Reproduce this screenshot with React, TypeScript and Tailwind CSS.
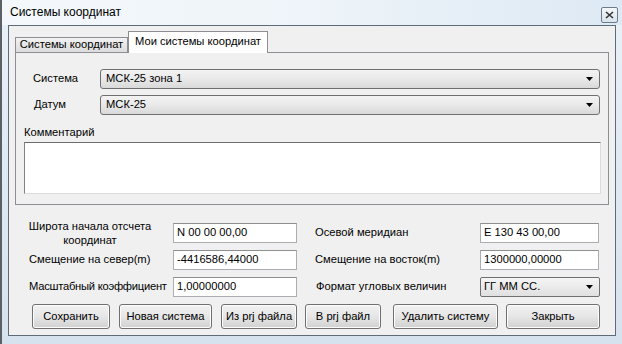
import React from 'react';

const font = { fontFamily: '"Liberation Sans", Arial, sans-serif' };

const Combo: React.FC<{ value: string; className?: string }> = ({ value, className }) => (
  <div
    className={`flex items-center justify-between rounded-[3px] border border-[#707070] bg-gradient-to-b from-[#f3f3f3] via-[#e9e9e9] to-[#d9d9d9] pl-[5px] pr-[6px] text-[11.2px] leading-none text-black ${className ?? ''}`}
  >
    <span>{value}</span>
    <svg width="7" height="4" viewBox="0 0 7 4">
      <path d="M0 0h7L3.5 4z" fill="#000" />
    </svg>
  </div>
);

const Field: React.FC<{ value: string; className?: string }> = ({ value, className }) => (
  <div
    className={`flex h-[20px] items-center border border-[#abadb3] border-t-[#8e8f8f] bg-white pl-[3px] text-[11.2px] leading-none text-black ${className ?? ''}`}
  >
    {value}
  </div>
);

const Btn: React.FC<{ label: string; className: string }> = ({ label, className }) => (
  <button
    className={`flex h-[25px] items-center justify-center whitespace-nowrap rounded-[3px] border border-[#707070] bg-gradient-to-b from-[#f2f2f2] via-[#e6e6e6] to-[#d1d1d1] text-[11.2px] leading-none text-black shadow-[inset_0_0_0_1px_#fcfcfc] ${className}`}
  >
    {label}
  </button>
);

export default function App() {
  return (
    <div
      style={font}
      className="flex h-[344px] w-[622px] flex-col overflow-hidden whitespace-nowrap border-l-2 border-[#5a6066] bg-gradient-to-b from-[#e9f1f8] to-[#d6e2ee]"
    >
      {/* title bar */}
      <div className="flex h-[25px] shrink-0 items-start justify-between bg-gradient-to-r from-[#f4f8fb] via-[#eef4f9] to-[#dde9f4] pl-[8px] pr-[4px]">
        <span className="mt-[6px] text-[12px] leading-none text-black">Системы координат</span>
        <div className="mt-[7px] flex h-[16px] w-[17px] items-center justify-center rounded-[2px] border border-[#6d7c8b] bg-gradient-to-b from-[#f4f7fa] to-[#d9e2eb]">
          <svg width="9" height="8" viewBox="0 0 9 8">
            <path d="M1 1l7 6M8 1L1 7" stroke="#333" strokeWidth="1.6" />
          </svg>
        </div>
      </div>

      {/* client area */}
      <div className="mb-[8px] ml-[6px] mr-[6px] flex flex-1 flex-col border border-[#5f6b76] bg-[#f0f0f0] pl-[6px] pr-[6px] pt-[5px] text-[11.2px]">
        {/* tabs */}
        <div className="flex h-[21px] items-end">
          <div className="flex h-[15px] w-[113px] items-center justify-center border border-b-0 border-[#8c8e94] bg-gradient-to-b from-[#f2f2f2] to-[#dcdcdc] leading-none text-black">
            Системы координат
          </div>
          <div className="relative -mb-[1px] flex h-[22px] w-[140px] items-center justify-center border border-b-0 border-[#8c8e94] bg-white pb-[2px] leading-none text-black">
            Мои системы координат
          </div>
        </div>
        {/* tab page */}
        <div className="flex h-[153px] flex-col border border-[#8c8e94] bg-[#f0f0f0] pl-[8px] pr-[8px]">
          <div className="mt-[16px] flex items-center">
            <span className="w-[76px] pl-[9px] leading-none text-black">Система</span>
            <Combo value="МСК-25 зона 1" className="h-[20px] flex-1" />
          </div>
          <div className="mt-[6px] flex items-center">
            <span className="w-[76px] pl-[10px] leading-none text-black">Датум</span>
            <Combo value="МСК-25" className="h-[20px] flex-1" />
          </div>
          <span className="mt-[12px] leading-none text-black">Комментарий</span>
          <div className="mr-[-1px] mt-[4px] h-[52px] border border-[#dcdcdc] border-t-[#6d6d6d] border-l-[#828282] bg-white" />
        </div>

        {/* parameters */}
        <div className="mt-[14px] flex pl-[12px] leading-none text-black">
          <div className="flex w-[288px] flex-col">
            <div className="flex h-[27px] items-center">
              <span className="w-[146px] pr-[20px] text-center leading-[14px]">
                Широта начала отсчета
                <br />
                координат
              </span>
              <Field value="N 00 00 00,00" className="w-[124px]" />
            </div>
            <div className="flex h-[27px] items-center">
              <span className="w-[146px] pl-[2px]">Смещение на север(m)</span>
              <Field value="-4416586,44000" className="w-[124px]" />
            </div>
            <div className="flex h-[27px] items-center">
              <span className="w-[146px] pl-[2px] tracking-[-0.25px]">Масштабный коэффициент</span>
              <Field value="1,00000000" className="w-[124px]" />
            </div>
          </div>
          <div className="flex w-[290px] flex-col">
            <div className="flex h-[27px] items-center">
              <span className="w-[165px]">Осевой меридиан</span>
              <Field value="E 130 43 00,00" className="w-[119px]" />
            </div>
            <div className="flex h-[27px] items-center">
              <span className="w-[165px]">Смещение на восток(m)</span>
              <Field value="1300000,00000" className="w-[119px]" />
            </div>
            <div className="flex h-[27px] items-center">
              <span className="w-[165px] pl-[1px]">Формат угловых величин</span>
              <div className="flex h-[20px] w-[120px] items-center justify-between rounded-[2px] border border-[#707070] bg-gradient-to-b from-[#f5f5f5] to-[#e0e0e0] pl-[3px] pr-[6px]">
                <span>ГГ ММ СС.</span>
                <svg width="7" height="4" viewBox="0 0 7 4">
                  <path d="M0 0h7L3.5 4z" fill="#000" />
                </svg>
              </div>
            </div>
          </div>
        </div>

        {/* buttons */}
        <div className="mt-[4px] flex pl-[17px]">
          <Btn label="Сохранить" className="w-[78px]" />
          <Btn label="Новая система" className="ml-[9px] w-[93px]" />
          <Btn label="Из prj файла" className="ml-[9px] w-[76px]" />
          <Btn label="В prj файл" className="ml-[8px] w-[76px]" />
          <Btn label="Удалить систему" className="ml-[12px] w-[105px]" />
          <Btn label="Закрыть" className="ml-[8px] w-[94px]" />
        </div>
      </div>
    </div>
  );
}
